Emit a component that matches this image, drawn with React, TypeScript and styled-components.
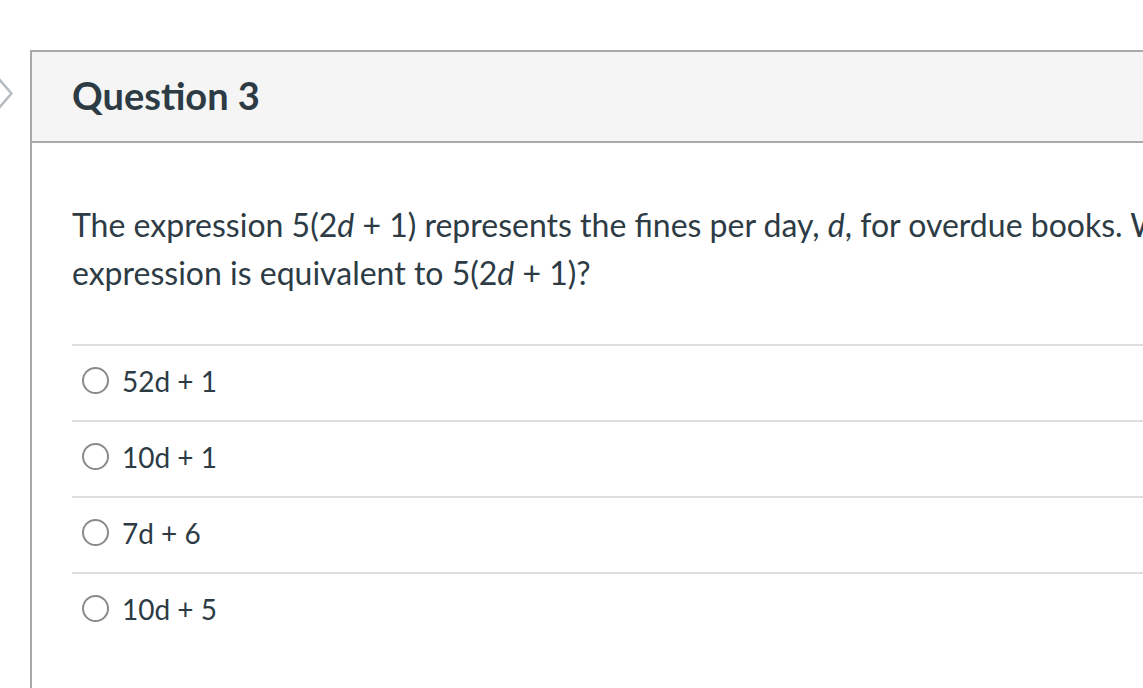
import React from "react";
import styled, { createGlobalStyle } from "styled-components";

const Global = createGlobalStyle`
  html, body { margin: 0; padding: 0; background: #fff; overflow: hidden; }
  body { font-family: Lato, "Open Sans", sans-serif; color: #2d3b45; }
`;

const Page = styled.div`
  display: flex;
  align-items: flex-start;
  padding-top: 50px;
  width: 1400px;
  height: 688px;
  box-sizing: border-box;
`;

const NavColumn = styled.div`
  width: 30px;
  flex: none;
  display: flex;
  justify-content: flex-start;
  padding-top: 27px;
  margin-left: -10px;
  margin-right: 10px;
`;

const Panel = styled.section`
  width: 1340px;
  flex: none;
  border: 2px solid #a9a9a9;
  border-right: none;
  min-height: 700px;
  box-sizing: border-box;
`;

const Header = styled.header`
  background: #f5f5f5;
  border-bottom: 2px solid #a9a9a9;
  height: 91px;
  box-sizing: border-box;
  display: flex;
  align-items: center;
  padding: 0 0 4px 40px;
`;

const Title = styled.h2`
  margin: 0;
  font-family: Lato, sans-serif;
  font-weight: 700;
  font-size: 38px;
  color: #2d3b45;
`;

const Body = styled.div`
  padding: 58px 40px 0 40px;
`;

const Prompt = styled.p`
  margin: 0;
  width: 1220px;
  font-size: 32px;
  line-height: 48px;
  color: #2d3b45;
`;

const Var = styled.i`
  font-style: italic;
`;

const Answers = styled.div`
  margin-top: 47px;
  width: 1220px;
`;

const Answer = styled.label`
  display: flex;
  align-items: center;
  height: 76px;
  box-sizing: border-box;
  border-top: 2px solid #dedede;
  padding: 0 0 4px 10px;
  gap: 13px;
  font-size: 28px;
  color: #2d3b45;
`;

const Radio = styled.span`
  width: 23px;
  height: 23px;
  border-radius: 50%;
  border: 2.5px solid #8a8a8a;
  flex: none;
  margin-top: -2px;
`;

const options = ["52d + 1", "10d + 1", "7d + 6", "10d + 5"];

export default function App() {
  return (
    <>
      <Global />
      <Page>
        <NavColumn>
          <svg width="26" height="34" viewBox="0 0 26 34" aria-hidden="true">
            <path d="M8.5 1.5 L21.5 16.5 L8.5 31.5" fill="none" stroke="#b5bcc2" strokeWidth="2.5" strokeLinejoin="round" />
          </svg>
        </NavColumn>
        <Panel>
          <Header>
            <Title>Question 3</Title>
          </Header>
          <Body>
            <Prompt>
              The expression 5(2<Var>d</Var> + 1) represents the fines per day, <Var>d</Var>, for overdue books. Which
              expression is equivalent to 5(2<Var>d</Var> + 1)?
            </Prompt>
            <Answers>
              {options.map((o) => (
                <Answer key={o}>
                  <Radio />
                  {o}
                </Answer>
              ))}
            </Answers>
          </Body>
        </Panel>
      </Page>
    </>
  );
}
